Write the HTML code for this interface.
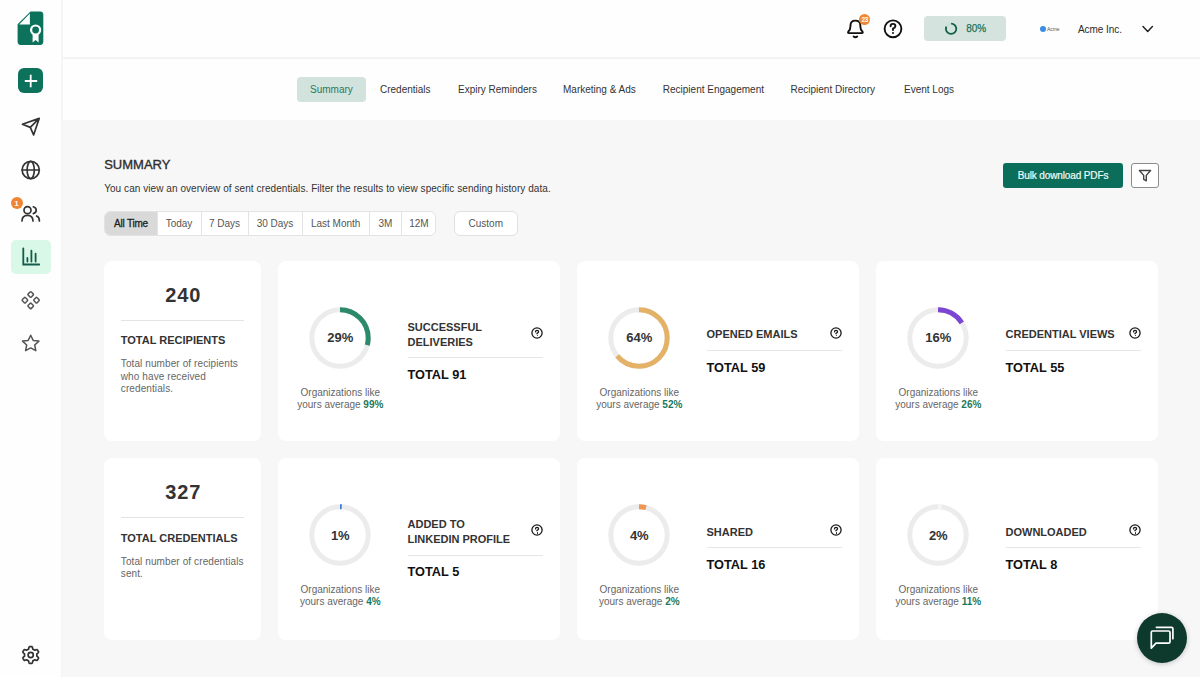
<!DOCTYPE html>
<html><head><meta charset="utf-8"><title>Summary</title><style>
*{box-sizing:border-box;margin:0;padding:0}
html,body{width:1200px;height:677px;overflow:hidden;background:#f7f7f7;font-family:"Liberation Sans",sans-serif;position:relative}
.t{position:absolute;white-space:nowrap}
.b{position:absolute}
svg{position:absolute;overflow:visible}
</style></head><body>
<div class="b" style="left:0;top:0;width:63px;height:677px;background:#fefefe;border-right:2px solid #f5f5f5"></div>
<div class="b" style="left:63px;top:0;width:1137px;height:59px;background:#fefefe;border-bottom:2px solid #f3f3f3"></div>
<div class="b" style="left:63px;top:59px;width:1137px;height:61px;background:#fefefe"></div>
<svg style="left:0;top:0" width="62" height="60" viewBox="0 0 62 60">
<path d="M30.5 11.6 H40.2 Q43.3 11.6 43.3 14.7 V41.8 Q43.3 44.9 40.2 44.9 H20.7 Q17.6 44.9 17.6 41.8 V24.3 Z" fill="#0c725c"/>
<path d="M19.2 24.4 L29.9 13.6 V24.4 Z" fill="#fff"/>
<circle cx="35.6" cy="30" r="4.5" fill="none" stroke="#fff" stroke-width="2.2"/>
<path d="M32.6 34.5 V42.4 L35.6 40 L38.6 42.4 V34.5 Z" fill="#fff"/>
</svg>
<div class="b" style="left:18.3px;top:68.3px;width:24.6px;height:24.8px;border-radius:6px;background:#0c725c"></div>
<svg style="left:0;top:60" width="62" height="40" viewBox="0 60 62 40">
<path d="M24.8 81 H37.2 M30.7 74.8 V87.2" stroke="#fff" stroke-width="1.8" fill="none"/></svg>
<svg style="left:0;top:100px" width="62" height="260" viewBox="0 100 62 260" fill="none" stroke="#333" stroke-width="1.7" stroke-linejoin="round" stroke-linecap="round">
<path d="M39.2 118.4 L22.4 124.2 L30.3 127.4 L33.6 134.9 Z M30.3 127.4 L39.2 118.4"/>
<circle cx="30.7" cy="170" r="8.6"/>
<ellipse cx="30.7" cy="170" rx="3.6" ry="8.6"/>
<path d="M22.1 170 H39.3"/>
</svg>
<svg style="left:0;top:195px" width="62" height="35" viewBox="0 195 62 35" fill="none" stroke="#333" stroke-width="1.7" stroke-linecap="round">
<circle cx="27.5" cy="210.2" r="3.5"/>
<path d="M22 221 Q22 215.3 27.5 215.3 Q33 215.3 33 221"/>
<path d="M33.3 206.8 Q36.2 207.6 36.2 210.2 Q36.2 212.8 33.3 213.6"/>
<path d="M36.6 216 Q39.4 217 39.4 221"/>
</svg>
<div class="b" style="left:10.6px;top:196.6px;width:12px;height:12px;border-radius:6px;background:#ef8533"></div>
<div class="t" style="left:-283.40px;width:600px;text-align:center;top:199.65px;font-size:7.5px;line-height:7.5px;color:#fff;font-weight:700;">1</div>
<div class="b" style="left:10.6px;top:240.3px;width:40px;height:33.7px;border-radius:5px;background:#d9f8e7"></div>
<svg style="left:0;top:240px" width="62" height="35" viewBox="0 240 62 35" fill="none" stroke="#125c49" stroke-width="1.8" stroke-linecap="round">
<path d="M23.3 248.5 V264.5 H39.2"/>
<path d="M27.4 258 V261.6 M31.4 250.6 V261.6 M35.6 253.7 V261.6"/>
</svg>
<svg style="left:0;top:285px" width="62" height="80" viewBox="0 285 62 80" fill="none" stroke="#555" stroke-width="1.5" stroke-linejoin="round">
<rect x="28.5" y="292.3" width="4.4" height="4.4" rx="0.9" transform="rotate(45 30.7 294.5)"/>
<rect x="22.7" y="298.0" width="4.4" height="4.4" rx="0.9" transform="rotate(45 24.9 300.2)"/>
<rect x="34.3" y="298.0" width="4.4" height="4.4" rx="0.9" transform="rotate(45 36.5 300.2)"/>
<rect x="28.5" y="303.7" width="4.4" height="4.4" rx="0.9" transform="rotate(45 30.7 305.9)"/>

<path d="M30.7 335.2 L33.2 340.4 L38.9 341.1 L34.7 345 L35.8 350.7 L30.7 347.9 L25.6 350.7 L26.7 345 L22.5 341.1 L28.2 340.4 Z"/>
</svg>
<svg style="left:0;top:640px" width="62" height="30" viewBox="0 640 62 30" fill="none" stroke="#333" stroke-width="1.7" stroke-linejoin="round">
<path d="M30.70 646.60 L30.85 646.60 L30.99 646.61 L31.14 646.61 L31.29 646.62 L31.43 646.63 L31.58 646.65 L31.72 646.66 L31.87 646.68 L32.01 646.70 L32.16 646.73 L32.26 646.96 L32.36 647.19 L32.45 647.44 L32.52 647.69 L32.59 647.95 L32.65 648.20 L32.70 648.46 L32.75 648.70 L32.79 648.94 L32.82 649.17 L32.92 649.21 L33.02 649.25 L33.12 649.29 L33.22 649.34 L33.32 649.38 L33.42 649.43 L33.51 649.48 L33.61 649.53 L33.71 649.58 L33.80 649.63 L33.89 649.69 L33.99 649.74 L34.08 649.80 L34.17 649.86 L34.26 649.92 L34.34 649.98 L34.43 650.05 L34.52 650.11 L34.60 650.18 L34.69 650.25 L34.90 650.17 L35.13 650.08 L35.37 650.00 L35.61 649.91 L35.86 649.84 L36.12 649.77 L36.37 649.71 L36.63 649.66 L36.88 649.62 L37.13 649.60 L37.23 649.71 L37.32 649.83 L37.41 649.94 L37.50 650.06 L37.58 650.18 L37.66 650.30 L37.74 650.43 L37.82 650.55 L37.90 650.67 L37.97 650.80 L38.05 650.93 L38.12 651.06 L38.18 651.19 L38.25 651.32 L38.31 651.45 L38.37 651.58 L38.43 651.72 L38.49 651.85 L38.54 651.99 L38.59 652.13 L38.45 652.33 L38.29 652.53 L38.12 652.73 L37.94 652.92 L37.75 653.11 L37.56 653.29 L37.37 653.46 L37.18 653.62 L36.99 653.78 L36.81 653.92 L36.82 654.03 L36.84 654.14 L36.85 654.24 L36.87 654.35 L36.88 654.46 L36.88 654.57 L36.89 654.68 L36.90 654.78 L36.90 654.89 L36.90 655.00 L36.90 655.11 L36.90 655.22 L36.89 655.32 L36.88 655.43 L36.88 655.54 L36.87 655.65 L36.85 655.76 L36.84 655.86 L36.82 655.97 L36.81 656.08 L36.99 656.22 L37.18 656.38 L37.37 656.54 L37.56 656.71 L37.75 656.89 L37.94 657.08 L38.12 657.27 L38.29 657.47 L38.45 657.67 L38.59 657.87 L38.54 658.01 L38.49 658.15 L38.43 658.28 L38.37 658.42 L38.31 658.55 L38.25 658.68 L38.18 658.81 L38.12 658.94 L38.05 659.07 L37.97 659.20 L37.90 659.33 L37.82 659.45 L37.74 659.57 L37.66 659.70 L37.58 659.82 L37.50 659.94 L37.41 660.06 L37.32 660.17 L37.23 660.29 L37.13 660.40 L36.88 660.38 L36.63 660.34 L36.37 660.29 L36.12 660.23 L35.86 660.16 L35.61 660.09 L35.37 660.00 L35.13 659.92 L34.90 659.83 L34.69 659.75 L34.60 659.82 L34.52 659.89 L34.43 659.95 L34.34 660.02 L34.26 660.08 L34.17 660.14 L34.08 660.20 L33.99 660.26 L33.89 660.31 L33.80 660.37 L33.71 660.42 L33.61 660.47 L33.51 660.52 L33.42 660.57 L33.32 660.62 L33.22 660.66 L33.12 660.71 L33.02 660.75 L32.92 660.79 L32.82 660.83 L32.79 661.06 L32.75 661.30 L32.70 661.54 L32.65 661.80 L32.59 662.05 L32.52 662.31 L32.45 662.56 L32.36 662.81 L32.26 663.04 L32.16 663.27 L32.01 663.30 L31.87 663.32 L31.72 663.34 L31.58 663.35 L31.43 663.37 L31.29 663.38 L31.14 663.39 L30.99 663.39 L30.85 663.40 L30.70 663.40 L30.55 663.40 L30.41 663.39 L30.26 663.39 L30.11 663.38 L29.97 663.37 L29.82 663.35 L29.68 663.34 L29.53 663.32 L29.39 663.30 L29.24 663.27 L29.14 663.04 L29.04 662.81 L28.95 662.56 L28.88 662.31 L28.81 662.05 L28.75 661.80 L28.70 661.54 L28.65 661.30 L28.61 661.06 L28.58 660.83 L28.48 660.79 L28.38 660.75 L28.28 660.71 L28.18 660.66 L28.08 660.62 L27.98 660.57 L27.89 660.52 L27.79 660.47 L27.69 660.42 L27.60 660.37 L27.51 660.31 L27.41 660.26 L27.32 660.20 L27.23 660.14 L27.14 660.08 L27.06 660.02 L26.97 659.95 L26.88 659.89 L26.80 659.82 L26.71 659.75 L26.50 659.83 L26.27 659.92 L26.03 660.00 L25.79 660.09 L25.54 660.16 L25.28 660.23 L25.03 660.29 L24.77 660.34 L24.52 660.38 L24.27 660.40 L24.17 660.29 L24.08 660.17 L23.99 660.06 L23.90 659.94 L23.82 659.82 L23.74 659.70 L23.66 659.57 L23.58 659.45 L23.50 659.33 L23.43 659.20 L23.35 659.07 L23.28 658.94 L23.22 658.81 L23.15 658.68 L23.09 658.55 L23.03 658.42 L22.97 658.28 L22.91 658.15 L22.86 658.01 L22.81 657.87 L22.95 657.67 L23.11 657.47 L23.28 657.27 L23.46 657.08 L23.65 656.89 L23.84 656.71 L24.03 656.54 L24.22 656.38 L24.41 656.22 L24.59 656.08 L24.58 655.97 L24.56 655.86 L24.55 655.76 L24.53 655.65 L24.52 655.54 L24.52 655.43 L24.51 655.32 L24.50 655.22 L24.50 655.11 L24.50 655.00 L24.50 654.89 L24.50 654.78 L24.51 654.68 L24.52 654.57 L24.52 654.46 L24.53 654.35 L24.55 654.24 L24.56 654.14 L24.58 654.03 L24.59 653.92 L24.41 653.78 L24.22 653.62 L24.03 653.46 L23.84 653.29 L23.65 653.11 L23.46 652.92 L23.28 652.73 L23.11 652.53 L22.95 652.33 L22.81 652.13 L22.86 651.99 L22.91 651.85 L22.97 651.72 L23.03 651.58 L23.09 651.45 L23.15 651.32 L23.22 651.19 L23.28 651.06 L23.35 650.93 L23.43 650.80 L23.50 650.67 L23.58 650.55 L23.66 650.43 L23.74 650.30 L23.82 650.18 L23.90 650.06 L23.99 649.94 L24.08 649.83 L24.17 649.71 L24.27 649.60 L24.52 649.62 L24.77 649.66 L25.03 649.71 L25.28 649.77 L25.54 649.84 L25.79 649.91 L26.03 650.00 L26.27 650.08 L26.50 650.17 L26.71 650.25 L26.80 650.18 L26.88 650.11 L26.97 650.05 L27.06 649.98 L27.14 649.92 L27.23 649.86 L27.32 649.80 L27.41 649.74 L27.51 649.69 L27.60 649.63 L27.69 649.58 L27.79 649.53 L27.89 649.48 L27.98 649.43 L28.08 649.38 L28.18 649.34 L28.28 649.29 L28.38 649.25 L28.48 649.21 L28.58 649.17 L28.61 648.94 L28.65 648.70 L28.70 648.46 L28.75 648.20 L28.81 647.95 L28.88 647.69 L28.95 647.44 L29.04 647.19 L29.14 646.96 L29.24 646.73 L29.39 646.70 L29.53 646.68 L29.68 646.66 L29.82 646.65 L29.97 646.63 L30.11 646.62 L30.26 646.61 L30.41 646.61 L30.55 646.60 Z"/>
<circle cx="30.7" cy="655" r="2.6"/>
</svg>
<svg style="left:840px;top:10px" width="80" height="36" viewBox="840 10 80 36" fill="none" stroke="#111" stroke-width="1.9" stroke-linecap="round" stroke-linejoin="round">
<path d="M849 33.1 H861.8 Q863.4 33.1 862.4 31.5 Q860.3 29.5 860.3 26 V25.3 Q860.3 20.6 855.4 20.6 Q850.5 20.6 850.5 25.3 V26 Q850.5 29.5 848.4 31.5 Q847.4 33.1 849 33.1 Z"/>
<path d="M853.6 36.6 Q855.4 38 857.2 36.6"/>
<circle cx="893" cy="28.8" r="8.4"/>
<path d="M890.6 26.2 Q890.6 23.9 893 23.9 Q895.4 23.9 895.4 26 Q895.4 27.6 893 28.7 V30.1"/>
</svg>
<div class="b" style="left:891.9px;top:32.1px;width:2.2px;height:2.2px;border-radius:1.1px;background:#111"></div>
<div class="b" style="left:859.2px;top:13.6px;width:11.2px;height:11.2px;border-radius:6px;background:#ef8737"></div>
<div class="t" style="left:564.80px;width:600px;text-align:center;top:16.70px;font-size:6.5px;line-height:6.5px;color:#fff;font-weight:700;letter-spacing:-0.3px;">23</div>
<div class="b" style="left:924.2px;top:16.4px;width:82.3px;height:24.2px;border-radius:4px;background:#d4e3de"></div>
<svg style="left:940px;top:18px" width="24" height="22" viewBox="940 18 24 22" fill="none" stroke-width="2">
<circle cx="951.1" cy="28.75" r="5.2" stroke="#c9ddd5" stroke-width="1.7"/>
<circle cx="951.1" cy="28.75" r="5.2" stroke="#0f5f47" stroke-width="1.8" stroke-dasharray="26.14 32.67" transform="rotate(-90 951.1 28.75)"/>
</svg>
<div class="t" style="left:966.20px;top:24.24px;font-size:10px;line-height:10px;color:#23735a;font-weight:400;-webkit-text-stroke:0.25px #23735a;">80%</div>
<div class="b" style="left:1039.9px;top:25.7px;width:6.2px;height:6.2px;border-radius:3.1px;background:#3a8ce6"></div>
<div class="t" style="left:1047.10px;top:27.07px;font-size:5px;line-height:5px;color:#555;font-weight:400;letter-spacing:-0.1px;">Acme</div>
<div class="t" style="left:1078.00px;top:24.83px;font-size:10px;line-height:10px;color:#2a2a2a;font-weight:400;letter-spacing:-0.05px;">Acme Inc.</div>
<svg style="left:1138px;top:20px" width="20" height="16" viewBox="1138 20 20 16" fill="none" stroke="#222" stroke-width="1.5" stroke-linecap="round" stroke-linejoin="round">
<path d="M1143 26.6 L1147.7 31.4 L1152.4 26.6"/></svg>
<div class="b" style="left:296.7px;top:76.9px;width:69.3px;height:24.8px;border-radius:4px;background:#d2e2dd"></div>
<div class="t" style="left:310.00px;top:84.73px;font-size:10px;line-height:10px;color:#2b7a62;font-weight:400;">Summary</div>
<div class="t" style="left:380.00px;top:84.73px;font-size:10px;line-height:10px;color:#333;font-weight:400;">Credentials</div>
<div class="t" style="left:458.00px;top:84.73px;font-size:10px;line-height:10px;color:#333;font-weight:400;">Expiry Reminders</div>
<div class="t" style="left:563.00px;top:84.73px;font-size:10px;line-height:10px;color:#333;font-weight:400;">Marketing &amp; Ads</div>
<div class="t" style="left:662.80px;top:84.73px;font-size:10px;line-height:10px;color:#333;font-weight:400;">Recipient Engagement</div>
<div class="t" style="left:790.50px;top:84.73px;font-size:10px;line-height:10px;color:#333;font-weight:400;">Recipient Directory</div>
<div class="t" style="left:904.00px;top:84.73px;font-size:10px;line-height:10px;color:#333;font-weight:400;">Event Logs</div>
<div class="t" style="left:104.20px;top:158.30px;font-size:13px;line-height:13px;color:#2e2e2e;font-weight:400;-webkit-text-stroke:0.35px #2e2e2e;">SUMMARY</div>
<div class="t" style="left:104.20px;top:183.84px;font-size:10px;line-height:10px;color:#333;font-weight:400;letter-spacing:0.06px;">You can view an overview of sent credentials. Filter the results to view specific sending history data.</div>
<div class="b" style="left:103.7px;top:210.8px;width:332.7px;height:25px;border-radius:6px;border:1px solid #e3e3e3;background:#fff;overflow:hidden"><div class="b" style="left:0;top:0;width:52px;height:25px;background:#d9d9d9"></div></div>
<div class="t" style="left:-169.00px;width:600px;text-align:center;top:219.03px;font-size:10px;line-height:10px;color:#1e1e1e;font-weight:400;letter-spacing:-0.2px;-webkit-text-stroke:0.3px #1e1e1e;">All Time</div>
<div class="b" style="left:156.5px;top:211px;width:1px;height:24px;background:#e3e3e3"></div>
<div class="t" style="left:-121.00px;width:600px;text-align:center;top:219.03px;font-size:10px;line-height:10px;color:#555;font-weight:400;">Today</div>
<div class="b" style="left:200.5px;top:211px;width:1px;height:24px;background:#e3e3e3"></div>
<div class="t" style="left:-75.50px;width:600px;text-align:center;top:219.03px;font-size:10px;line-height:10px;color:#555;font-weight:400;">7 Days</div>
<div class="b" style="left:247.5px;top:211px;width:1px;height:24px;background:#e3e3e3"></div>
<div class="t" style="left:-25.00px;width:600px;text-align:center;top:219.03px;font-size:10px;line-height:10px;color:#555;font-weight:400;">30 Days</div>
<div class="b" style="left:301.5px;top:211px;width:1px;height:24px;background:#e3e3e3"></div>
<div class="t" style="left:35.70px;width:600px;text-align:center;top:219.03px;font-size:10px;line-height:10px;color:#555;font-weight:400;">Last Month</div>
<div class="b" style="left:368.9px;top:211px;width:1px;height:24px;background:#e3e3e3"></div>
<div class="t" style="left:85.40px;width:600px;text-align:center;top:219.03px;font-size:10px;line-height:10px;color:#555;font-weight:400;">3M</div>
<div class="b" style="left:400.9px;top:211px;width:1px;height:24px;background:#e3e3e3"></div>
<div class="t" style="left:118.90px;width:600px;text-align:center;top:219.03px;font-size:10px;line-height:10px;color:#555;font-weight:400;">12M</div>
<div class="b" style="left:454px;top:211.2px;width:63.6px;height:24.4px;border-radius:6px;border:1px solid #e0e0e0;background:#fff"></div>
<div class="t" style="left:185.80px;width:600px;text-align:center;top:219.03px;font-size:10px;line-height:10px;color:#555;font-weight:400;">Custom</div>
<div class="b" style="left:1002.8px;top:163.2px;width:120.4px;height:24.7px;border-radius:3px;background:#0b6e5a"></div>
<div class="t" style="left:763.00px;width:600px;text-align:center;top:170.84px;font-size:10px;line-height:10px;color:#f0fbf6;font-weight:400;letter-spacing:-0.12px;-webkit-text-stroke:0.2px #f0fbf6;">Bulk download PDFs</div>
<div class="b" style="left:1131.3px;top:163.2px;width:27.3px;height:24.7px;border-radius:3px;border:1.3px solid #8c8c8c;background:#fff"></div>
<svg style="left:1131px;top:163px" width="28" height="25" viewBox="1131 163 28 25" fill="none" stroke="#444" stroke-width="1.4" stroke-linejoin="round">
<path d="M1139.4 170.5 H1150.6 L1146.3 175.4 V180.8 L1143.7 179.4 V175.4 Z"/></svg>
<div class="b" style="left:104px;top:261px;width:157px;height:180px;border-radius:8px;background:#fff"></div>
<div class="b" style="left:278px;top:261px;width:282px;height:180px;border-radius:8px;background:#fff"></div>
<div class="b" style="left:577px;top:261px;width:282px;height:180px;border-radius:8px;background:#fff"></div>
<div class="b" style="left:876px;top:261px;width:282px;height:180px;border-radius:8px;background:#fff"></div>
<div class="b" style="left:104px;top:458.3px;width:157px;height:181.5px;border-radius:8px;background:#fff"></div>
<div class="b" style="left:278px;top:458.3px;width:282px;height:181.5px;border-radius:8px;background:#fff"></div>
<div class="b" style="left:577px;top:458.3px;width:282px;height:181.5px;border-radius:8px;background:#fff"></div>
<div class="b" style="left:876px;top:458.3px;width:282px;height:181.5px;border-radius:8px;background:#fff"></div>
<div class="t" style="left:-116.75px;width:600px;text-align:center;top:284.87px;font-size:20px;line-height:20px;color:#333;font-weight:700;letter-spacing:0.9px;">240</div>
<div class="b" style="left:120.8px;top:319.6px;width:123.6px;height:1px;background:#e4e4e4"></div>
<div class="t" style="left:120.80px;top:335.49px;font-size:11px;line-height:11px;color:#333;font-weight:700;">TOTAL RECIPIENTS</div>
<div class="t" style="left:120.80px;top:359.34px;font-size:10px;line-height:10px;color:#666;font-weight:400;letter-spacing:0.1px;">Total number of recipients</div>
<div class="t" style="left:120.80px;top:371.84px;font-size:10px;line-height:10px;color:#666;font-weight:400;letter-spacing:0.1px;">who have received</div>
<div class="t" style="left:120.80px;top:384.34px;font-size:10px;line-height:10px;color:#666;font-weight:400;letter-spacing:0.1px;">credentials.</div>
<div class="t" style="left:-116.75px;width:600px;text-align:center;top:482.17px;font-size:20px;line-height:20px;color:#333;font-weight:700;letter-spacing:0.9px;">327</div>
<div class="b" style="left:120.8px;top:516.9px;width:123.6px;height:1px;background:#e4e4e4"></div>
<div class="t" style="left:120.80px;top:532.79px;font-size:11px;line-height:11px;color:#333;font-weight:700;">TOTAL CREDENTIALS</div>
<div class="t" style="left:120.80px;top:556.63px;font-size:10px;line-height:10px;color:#666;font-weight:400;letter-spacing:0.1px;">Total number of credentials</div>
<div class="t" style="left:120.80px;top:569.13px;font-size:10px;line-height:10px;color:#666;font-weight:400;letter-spacing:0.1px;">sent.</div>
<svg style="left:308.3px;top:305.6px" width="64" height="64" viewBox="308.3 305.6 64 64" fill="none" stroke-width="5">
<circle cx="340.3" cy="337.6" r="28.2" stroke="#ececec"/>
<circle cx="340.3" cy="337.6" r="28.2" stroke="#2c8a6b" stroke-dasharray="51.38 177.19" transform="rotate(-90 340.3 337.6)"/>
</svg>
<div class="t" style="left:40.30px;width:600px;text-align:center;top:331.40px;font-size:13px;line-height:13px;color:#333;font-weight:700;">29%</div>
<div class="t" style="left:40.30px;width:600px;text-align:center;top:387.64px;font-size:10px;line-height:10px;color:#666;font-weight:400;">Organizations like</div>
<div class="t" style="left:40.30px;width:600px;text-align:center;top:399.64px;font-size:10px;line-height:10px;color:#666;font-weight:400;">yours average <b style="color:#1b7a5c;font-weight:700">99%</b></div>
<div class="t" style="left:407.50px;top:321.79px;font-size:11px;line-height:11px;color:#333;font-weight:700;">SUCCESSFUL</div>
<div class="t" style="left:407.50px;top:336.69px;font-size:11px;line-height:11px;color:#333;font-weight:700;">DELIVERIES</div>
<div class="b" style="left:407.5px;top:357.2px;width:135.5px;height:1.3px;background:#e6e6e6"></div>
<div class="t" style="left:407.50px;top:369.11px;font-size:12.75px;line-height:12.75px;color:#111;font-weight:700;">TOTAL 91</div>
<svg style="left:529.3px;top:325.0px" width="16" height="16" viewBox="529.3 325.0 16 16" fill="none" stroke="#1a1a1a" stroke-width="1.3" stroke-linecap="round">
<circle cx="537.3" cy="333.0" r="5.1"/>
<path d="M535.80 331.90 Q535.80 330.30 537.30 330.30 Q538.90 330.30 538.90 331.80 Q538.90 332.70 537.30 333.40 V333.80"/>
</svg>
<div class="b" style="left:536.55px;top:334.70px;width:1.5px;height:1.5px;border-radius:1px;background:#1a1a1a"></div>
<svg style="left:607.3px;top:305.6px" width="64" height="64" viewBox="607.3 305.6 64 64" fill="none" stroke-width="5">
<circle cx="639.3" cy="337.6" r="28.2" stroke="#ececec"/>
<circle cx="639.3" cy="337.6" r="28.2" stroke="#e4b266" stroke-dasharray="113.40 177.19" transform="rotate(-90 639.3 337.6)"/>
</svg>
<div class="t" style="left:339.30px;width:600px;text-align:center;top:331.40px;font-size:13px;line-height:13px;color:#333;font-weight:700;">64%</div>
<div class="t" style="left:339.30px;width:600px;text-align:center;top:387.64px;font-size:10px;line-height:10px;color:#666;font-weight:400;">Organizations like</div>
<div class="t" style="left:339.30px;width:600px;text-align:center;top:399.64px;font-size:10px;line-height:10px;color:#666;font-weight:400;">yours average <b style="color:#1b7a5c;font-weight:700">52%</b></div>
<div class="t" style="left:706.50px;top:329.49px;font-size:11px;line-height:11px;color:#333;font-weight:700;">OPENED EMAILS</div>
<div class="b" style="left:706.5px;top:349.5px;width:135.5px;height:1.3px;background:#e6e6e6"></div>
<div class="t" style="left:706.50px;top:361.71px;font-size:12.75px;line-height:12.75px;color:#111;font-weight:700;">TOTAL 59</div>
<svg style="left:828.3px;top:325.0px" width="16" height="16" viewBox="828.3 325.0 16 16" fill="none" stroke="#1a1a1a" stroke-width="1.3" stroke-linecap="round">
<circle cx="836.3" cy="333.0" r="5.1"/>
<path d="M834.80 331.90 Q834.80 330.30 836.30 330.30 Q837.90 330.30 837.90 331.80 Q837.90 332.70 836.30 333.40 V333.80"/>
</svg>
<div class="b" style="left:835.55px;top:334.70px;width:1.5px;height:1.5px;border-radius:1px;background:#1a1a1a"></div>
<svg style="left:906.3px;top:305.6px" width="64" height="64" viewBox="906.3 305.6 64 64" fill="none" stroke-width="5">
<circle cx="938.3" cy="337.6" r="28.2" stroke="#ececec"/>
<circle cx="938.3" cy="337.6" r="28.2" stroke="#7c45d2" stroke-dasharray="28.35 177.19" transform="rotate(-90 938.3 337.6)"/>
</svg>
<div class="t" style="left:638.30px;width:600px;text-align:center;top:331.40px;font-size:13px;line-height:13px;color:#333;font-weight:700;">16%</div>
<div class="t" style="left:638.30px;width:600px;text-align:center;top:387.64px;font-size:10px;line-height:10px;color:#666;font-weight:400;">Organizations like</div>
<div class="t" style="left:638.30px;width:600px;text-align:center;top:399.64px;font-size:10px;line-height:10px;color:#666;font-weight:400;">yours average <b style="color:#1b7a5c;font-weight:700">26%</b></div>
<div class="t" style="left:1005.50px;top:329.49px;font-size:11px;line-height:11px;color:#333;font-weight:700;">CREDENTIAL VIEWS</div>
<div class="b" style="left:1005.5px;top:349.5px;width:135.5px;height:1.3px;background:#e6e6e6"></div>
<div class="t" style="left:1005.50px;top:361.71px;font-size:12.75px;line-height:12.75px;color:#111;font-weight:700;">TOTAL 55</div>
<svg style="left:1127.3px;top:325.0px" width="16" height="16" viewBox="1127.3 325.0 16 16" fill="none" stroke="#1a1a1a" stroke-width="1.3" stroke-linecap="round">
<circle cx="1135.3" cy="333.0" r="5.1"/>
<path d="M1133.80 331.90 Q1133.80 330.30 1135.30 330.30 Q1136.90 330.30 1136.90 331.80 Q1136.90 332.70 1135.30 333.40 V333.80"/>
</svg>
<div class="b" style="left:1134.55px;top:334.70px;width:1.5px;height:1.5px;border-radius:1px;background:#1a1a1a"></div>
<svg style="left:308.3px;top:502.9px" width="64" height="64" viewBox="308.3 502.9 64 64" fill="none" stroke-width="5">
<circle cx="340.3" cy="534.9" r="28.2" stroke="#ececec"/>
<circle cx="340.3" cy="534.9" r="28.2" stroke="#3a7fd5" stroke-dasharray="1.77 177.19" transform="rotate(-90 340.3 534.9)"/>
</svg>
<div class="t" style="left:40.30px;width:600px;text-align:center;top:528.70px;font-size:13px;line-height:13px;color:#333;font-weight:700;">1%</div>
<div class="t" style="left:40.30px;width:600px;text-align:center;top:584.93px;font-size:10px;line-height:10px;color:#666;font-weight:400;">Organizations like</div>
<div class="t" style="left:40.30px;width:600px;text-align:center;top:596.93px;font-size:10px;line-height:10px;color:#666;font-weight:400;">yours average <b style="color:#1b7a5c;font-weight:700">4%</b></div>
<div class="t" style="left:407.50px;top:519.09px;font-size:11px;line-height:11px;color:#333;font-weight:700;">ADDED TO</div>
<div class="t" style="left:407.50px;top:533.99px;font-size:11px;line-height:11px;color:#333;font-weight:700;">LINKEDIN PROFILE</div>
<div class="b" style="left:407.5px;top:554.5px;width:135.5px;height:1.3px;background:#e6e6e6"></div>
<div class="t" style="left:407.50px;top:566.41px;font-size:12.75px;line-height:12.75px;color:#111;font-weight:700;">TOTAL 5</div>
<svg style="left:529.3px;top:522.3px" width="16" height="16" viewBox="529.3 522.3 16 16" fill="none" stroke="#1a1a1a" stroke-width="1.3" stroke-linecap="round">
<circle cx="537.3" cy="530.3" r="5.1"/>
<path d="M535.80 529.20 Q535.80 527.60 537.30 527.60 Q538.90 527.60 538.90 529.10 Q538.90 530.00 537.30 530.70 V531.10"/>
</svg>
<div class="b" style="left:536.55px;top:532.00px;width:1.5px;height:1.5px;border-radius:1px;background:#1a1a1a"></div>
<svg style="left:607.3px;top:502.9px" width="64" height="64" viewBox="607.3 502.9 64 64" fill="none" stroke-width="5">
<circle cx="639.3" cy="534.9" r="28.2" stroke="#ececec"/>
<circle cx="639.3" cy="534.9" r="28.2" stroke="#ef9752" stroke-dasharray="7.09 177.19" transform="rotate(-90 639.3 534.9)"/>
</svg>
<div class="t" style="left:339.30px;width:600px;text-align:center;top:528.70px;font-size:13px;line-height:13px;color:#333;font-weight:700;">4%</div>
<div class="t" style="left:339.30px;width:600px;text-align:center;top:584.93px;font-size:10px;line-height:10px;color:#666;font-weight:400;">Organizations like</div>
<div class="t" style="left:339.30px;width:600px;text-align:center;top:596.93px;font-size:10px;line-height:10px;color:#666;font-weight:400;">yours average <b style="color:#1b7a5c;font-weight:700">2%</b></div>
<div class="t" style="left:706.50px;top:526.79px;font-size:11px;line-height:11px;color:#333;font-weight:700;">SHARED</div>
<div class="b" style="left:706.5px;top:546.8px;width:135.5px;height:1.3px;background:#e6e6e6"></div>
<div class="t" style="left:706.50px;top:559.01px;font-size:12.75px;line-height:12.75px;color:#111;font-weight:700;">TOTAL 16</div>
<svg style="left:828.3px;top:522.3px" width="16" height="16" viewBox="828.3 522.3 16 16" fill="none" stroke="#1a1a1a" stroke-width="1.3" stroke-linecap="round">
<circle cx="836.3" cy="530.3" r="5.1"/>
<path d="M834.80 529.20 Q834.80 527.60 836.30 527.60 Q837.90 527.60 837.90 529.10 Q837.90 530.00 836.30 530.70 V531.10"/>
</svg>
<div class="b" style="left:835.55px;top:532.00px;width:1.5px;height:1.5px;border-radius:1px;background:#1a1a1a"></div>
<svg style="left:906.3px;top:502.9px" width="64" height="64" viewBox="906.3 502.9 64 64" fill="none" stroke-width="5">
<circle cx="938.3" cy="534.9" r="28.2" stroke="#ececec"/>
<circle cx="938.3" cy="534.9" r="28.2" stroke="#f6f6f6" stroke-dasharray="3.54 177.19" transform="rotate(-90 938.3 534.9)"/>
</svg>
<div class="t" style="left:638.30px;width:600px;text-align:center;top:528.70px;font-size:13px;line-height:13px;color:#333;font-weight:700;">2%</div>
<div class="t" style="left:638.30px;width:600px;text-align:center;top:584.93px;font-size:10px;line-height:10px;color:#666;font-weight:400;">Organizations like</div>
<div class="t" style="left:638.30px;width:600px;text-align:center;top:596.93px;font-size:10px;line-height:10px;color:#666;font-weight:400;">yours average <b style="color:#1b7a5c;font-weight:700">11%</b></div>
<div class="t" style="left:1005.50px;top:526.79px;font-size:11px;line-height:11px;color:#333;font-weight:700;">DOWNLOADED</div>
<div class="b" style="left:1005.5px;top:546.8px;width:135.5px;height:1.3px;background:#e6e6e6"></div>
<div class="t" style="left:1005.50px;top:559.01px;font-size:12.75px;line-height:12.75px;color:#111;font-weight:700;">TOTAL 8</div>
<svg style="left:1127.3px;top:522.3px" width="16" height="16" viewBox="1127.3 522.3 16 16" fill="none" stroke="#1a1a1a" stroke-width="1.3" stroke-linecap="round">
<circle cx="1135.3" cy="530.3" r="5.1"/>
<path d="M1133.80 529.20 Q1133.80 527.60 1135.30 527.60 Q1136.90 527.60 1136.90 529.10 Q1136.90 530.00 1135.30 530.70 V531.10"/>
</svg>
<div class="b" style="left:1134.55px;top:532.00px;width:1.5px;height:1.5px;border-radius:1px;background:#1a1a1a"></div>
<div class="b" style="left:1137px;top:613.3px;width:50px;height:50px;border-radius:25px;background:#0d3a2d;box-shadow:0 1px 5px rgba(0,0,0,0.22)"></div>
<svg style="left:1140px;top:615px" width="46" height="46" viewBox="1140 615 46 46" fill="none" stroke="#fff" stroke-width="1.7" stroke-linejoin="round" stroke-linecap="round">
<path d="M1156.4 627.3 H1171.5 Q1172.9 627.3 1172.9 628.7 V638.7"/>
<path d="M1152.4 631 H1168.6 Q1170 631 1170 632.4 V641.8 Q1170 643.2 1168.6 643.2 H1156 L1151.3 648.2 V632.4 Q1151.3 631 1152.4 631 Z"/>
</svg>
</body></html>
